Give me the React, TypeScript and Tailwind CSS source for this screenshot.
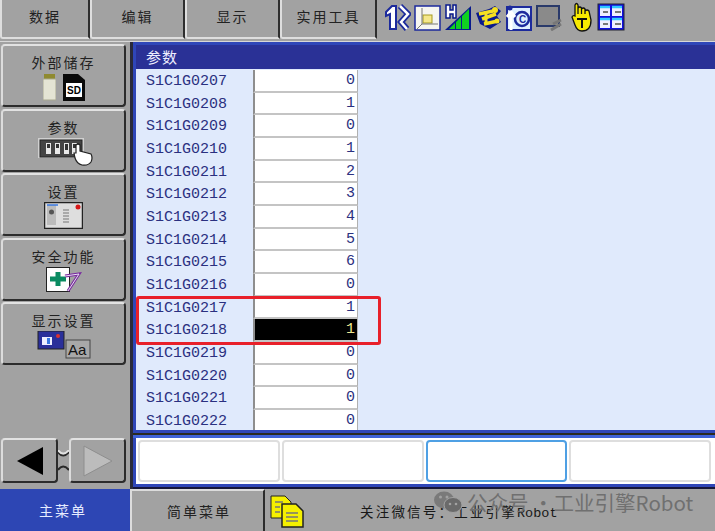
import React from "react";

const cjk = "font-['Noto_Sans_CJK_SC','Noto_Sans',sans-serif]";
const bevel =
  "border-2 border-t-[#e2e2e2] border-l-[#dcdcdc] border-r-[#2c2c2c] border-b-[#2c2c2c] rounded-[4px] bg-[#a2a2a2]";

const rows: [string, string][] = [
  ["S1C1G0207", "0"],
  ["S1C1G0208", "1"],
  ["S1C1G0209", "0"],
  ["S1C1G0210", "1"],
  ["S1C1G0211", "2"],
  ["S1C1G0212", "3"],
  ["S1C1G0213", "4"],
  ["S1C1G0214", "5"],
  ["S1C1G0215", "6"],
  ["S1C1G0216", "0"],
  ["S1C1G0217", "1"],
  ["S1C1G0218", "1"],
  ["S1C1G0219", "0"],
  ["S1C1G0220", "0"],
  ["S1C1G0221", "0"],
  ["S1C1G0222", "0"],
];

function TopButton({ label, width }: { label: string; width: string }) {
  return (
    <div
      className={`${width} h-[39px] flex items-center justify-center pb-[4px] border-l-2 border-l-[#dedede] border-r-2 border-r-[#2e2e2e] border-b-2 border-b-[#dedede] rounded-bl-[3px] text-[14px] tracking-[2px] text-[#222] ${cjk}`}
    >
      {label}
    </div>
  );
}

function ToolIcons() {
  return (
    <div className="flex items-center gap-[3px] ml-[7px] mt-[3px] h-[28px] self-start">
      <svg width="27" height="28" viewBox="0 0 27 28">
        <path d="M2 9 L8 3 H12 V26 H6 V11 L2 13Z" fill="#fff" stroke="#1c2a9c" strokeWidth="2" />
        <path d="M16 3 L24 11 L17 19 L23 26" fill="none" stroke="#1c2a9c" strokeWidth="6" />
        <path d="M16 3 L24 11 L17 19 L23 26" fill="none" stroke="#fff" strokeWidth="2.5" />
      </svg>
      <svg width="27" height="28" viewBox="0 0 27 28">
        <rect x="1" y="3" width="25" height="24" fill="#f6f6f0" stroke="#1c2a9c" strokeWidth="1.5" />
        <rect x="9" y="12" width="9" height="8" fill="#f5e88a" stroke="#a59a20" />
        <path d="M8 5 V21 H24 M8 21 L3 26" fill="none" stroke="#777" strokeWidth="1" />
      </svg>
      <svg width="28" height="28" viewBox="0 0 28 28">
        <path d="M1 27 L27 3 V27Z" fill="#0a1a8c" />
        <path d="M5 26 L11 20 V26Z M12 26 V19 L17 14 V26Z M18 26 V13 L25 6 V26Z" fill="#10d020" />
        <path d="M2 2 V15 H6 V11 H9 V15 H12 V2 H9 V7 H6 V2Z" fill="#fff" stroke="#0a1a8c" strokeWidth="1.5" />
      </svg>
      <svg width="27" height="28" viewBox="0 0 27 28">
        <path d="M1 10 L14 6 L20 3 L26 8 L22 13 L26 19 L15 26 L5 21 Z" fill="#0a1a8c" />
        <path d="M4 11 L18 8 M7 16 L21 11 M9 21 L23 18" stroke="#f5e020" strokeWidth="3.5" fill="none" />
        <path d="M11 8 V20" stroke="#f5e020" strokeWidth="3" />
        <circle cx="20" cy="7" r="3" fill="#f5e020" />
        <circle cx="22" cy="18" r="2.5" fill="#f5e020" />
      </svg>
      <svg width="27" height="28" viewBox="0 0 27 28">
        <rect x="2" y="4" width="24" height="23" fill="#dff0ff" stroke="#1c2a9c" strokeWidth="2" />
        <circle cx="17" cy="16" r="7" fill="none" stroke="#1c2a9c" strokeWidth="2.5" />
        <text x="14" y="20" fontSize="10" fill="#1c2a9c" fontFamily="Liberation Sans, sans-serif" fontWeight="700">C</text>
        <path d="M6 27 V12 M2 14 L6 9 L10 14" stroke="#fff" strokeWidth="3" fill="none" />
        <circle cx="5" cy="5" r="2.5" fill="#1c2a9c" />
      </svg>
      <svg width="27" height="28" viewBox="0 0 27 28">
        <rect x="2" y="3" width="22" height="20" fill="#8a8a8a" stroke="#2a3a6a" strokeWidth="2" />
        <path d="M16 27 L26 21 M18 21 L26 17" stroke="#777" strokeWidth="3" />
      </svg>
      <svg width="21" height="30" viewBox="0 0 21 30" className="ml-[6px]">
        <path d="M4 3 Q5.5 0 7 3 V12 V6 Q9 4 10.5 6 V12 V7 Q12.5 5 14 7 V12 V9 Q16 7 18 9 L20 18 Q20 29 11 29 Q6 29 4 23 L1 15 Q2 13 4 14Z" fill="#f7ea00" stroke="#111" strokeWidth="1.3" />
        <path d="M6 17 H16 M11 17 V26" stroke="#111" strokeWidth="2" />
      </svg>
      <svg width="28" height="28" viewBox="0 0 28 28" className="ml-[2px]">
        <rect x="1" y="1" width="26" height="26" fill="#1010e0" stroke="#223" />
        <rect x="3" y="3" width="10" height="10" fill="#eef" />
        <rect x="15" y="3" width="10" height="10" fill="#eef" />
        <rect x="3" y="15" width="10" height="10" fill="#eef" />
        <rect x="15" y="15" width="10" height="10" fill="#eef" />
        <path d="M3 4 H13 M15 4 H25 M3 16 H13 M15 16 H25" stroke="#30c8ff" strokeWidth="2.5" />
        <path d="M6 9 H11 M18 9 H24 M6 21 H11 M18 21 H24" stroke="#777" strokeWidth="2" />
      </svg>
    </div>
  );
}

function Icon({ kind }: { kind: string }) {
  if (kind === "storage")
    return (
      <div className="flex items-end gap-[7px] h-[28px]">
        <svg width="13" height="27" viewBox="0 0 13 27">
          <rect x="1" y="0" width="11" height="5" fill="#8f8a30" />
          <rect x="0" y="5" width="13" height="21" fill="#e4e4d4" stroke="#a8a890" />
        </svg>
        <svg width="22" height="27" viewBox="0 0 22 27">
          <path d="M0 0 H15 L22 6 V27 H0Z" fill="#0a0a0a" />
          <rect x="3" y="9" width="16" height="14" fill="#fff" />
          <text x="4" y="20" fontSize="10" fontWeight="700" fontFamily="Liberation Sans, sans-serif" fill="#000">SD</text>
        </svg>
      </div>
    );
  if (kind === "param")
    return (
      <svg width="56" height="28" viewBox="0 0 56 28" className="-mr-[4px]">
        <rect x="0" y="0" width="46" height="20" fill="#d0d0d0" />
        <rect x="2" y="2" width="42" height="17" fill="#444" stroke="#222" />
        <rect x="8" y="5" width="5" height="11" fill="#e8e8e8" />
        <rect x="17" y="5" width="5" height="11" fill="#e8e8e8" />
        <rect x="26" y="5" width="5" height="11" fill="#e8e8e8" />
        <rect x="34" y="5" width="5" height="11" fill="#e8e8e8" />
        <rect x="9" y="6" width="3" height="4" fill="#333" />
        <rect x="18" y="6" width="3" height="4" fill="#333" />
        <rect x="27" y="6" width="3" height="6" fill="#333" />
        <rect x="35" y="6" width="3" height="4" fill="#333" />
        <path d="M38 7 Q40 5 42 7 V13 L53 16 Q55 20 53 24 Q50 28 44 27 Q39 26 37 20 L36 15 H38Z" fill="#fff" stroke="#222" strokeWidth="1.2" />
      </svg>
    );
  if (kind === "setting")
    return (
      <svg width="39" height="27" viewBox="0 0 39 27">
        <rect x="0.5" y="0.5" width="38" height="26" fill="#dedede" stroke="#222" strokeWidth="1.5" />
        <rect x="3" y="3" width="9" height="20" fill="#bcbcbc" />
        <path d="M3 3 H14" stroke="#3a78e0" strokeWidth="1.5" />
        <circle cx="7.5" cy="10" r="2.5" fill="#555" />
        <path d="M19 8 H25 M19 11 H25 M19 14 H25 M19 17 H25 M19 20 H25" stroke="#999" strokeWidth="1.5" />
        <circle cx="34" cy="5" r="2.5" fill="#d81818" />
      </svg>
    );
  if (kind === "safe")
    return (
      <svg width="36" height="26" viewBox="0 0 36 26">
        <rect x="0.5" y="0.5" width="23" height="24" fill="#fdfdfd" stroke="#222" />
        <path d="M12 5 V19 M4 12 H20" stroke="#098a60" strokeWidth="5" />
        <path d="M19 9 L33 7 L22 24" fill="none" stroke="#7a2aa0" strokeWidth="3" />
        <path d="M19 9 L33 7 L22 24" fill="none" stroke="#e8e0f0" strokeWidth="1" />
      </svg>
    );
  return (
    <svg width="54" height="28" viewBox="0 0 54 28">
      <rect x="1" y="0" width="26" height="18" fill="#2a2f9a" stroke="#222" />
      <rect x="5" y="6" width="10" height="8" fill="#eef" />
      <rect x="10" y="7" width="3" height="6" fill="#3a78e0" />
      <circle cx="21" cy="5" r="2" fill="#d83030" />
      <rect x="29" y="9" width="24" height="18" fill="#a8a8a8" stroke="#444" />
      <text x="31" y="24" fontSize="15" fontFamily="Liberation Sans, sans-serif" fill="#111">Aa</text>
    </svg>
  );
}

function SideButton({ label, icon }: { label: string; icon: string }) {
  return (
    <div className={`${bevel} w-[125px] h-[63px] flex flex-col items-center pt-[7px]`}>
      <div className={`text-[14px] leading-[18px] tracking-[2px] text-[#222] ${cjk}`}>{label}</div>
      <div className="mt-[2px] flex justify-center">
        <Icon kind={icon} />
      </div>
    </div>
  );
}

function Row({ name, value, index }: { name: string; value: string; index: number }) {
  const selected = name === "S1C1G0218";
  return (
    <div className="h-[22.67px] shrink-0 flex items-stretch">
      <div className="w-[117px] pl-[10px] pt-[2px] flex items-center text-[15px] text-[#2b3080] font-['Liberation_Mono',monospace]">
        {name}
      </div>
      <div
        className={`w-[105px] flex items-center justify-end pr-[2px] pt-[2px] text-[15px] font-['Liberation_Mono',monospace] border-l-2 border-l-[#8e8e8e] border-b-2 border-b-[#c4c4c4] border-r border-r-[#b0b0b0] ${
          selected ? "bg-black text-[#f0e890]" : "bg-white text-[#2b3080]"
        }`}
        data-index={index}
      >
        {value}
      </div>
    </div>
  );
}

export default function App() {
  return (
    <div className="relative w-[715px] h-[531px] overflow-hidden bg-[#a2a2a2] flex flex-col">
      <div className="flex h-[42px] shrink-0 border-b border-[#d8d8d8]">
        <TopButton label="数据" width="w-[90px]" />
        <TopButton label="编辑" width="w-[95px]" />
        <TopButton label="显示" width="w-[95px]" />
        <TopButton label="实用工具" width="w-[97px]" />
        <ToolIcons />
      </div>

      <div className="flex h-[447px] shrink-0">
        <div className="w-[130px] shrink-0 flex flex-col pl-[1px] pt-[2px]">
          <div className="flex flex-col gap-[1.5px]">
            <SideButton label="外部储存" icon="storage" />
            <SideButton label="参数" icon="param" />
            <SideButton label="设置" icon="setting" />
            <SideButton label="安全功能" icon="safe" />
            <SideButton label="显示设置" icon="display" />
          </div>
          <div className="flex items-center mt-[73px] w-[125px]">
            <div className={`${bevel} w-[57px] h-[45px] flex items-center justify-center`}>
              <svg width="28" height="30" viewBox="0 0 28 30"><path d="M27 1 V29 L1 15Z" fill="#000" /></svg>
            </div>
            <svg width="11" height="22" viewBox="0 0 11 22" className="shrink-0">
              <path d="M0 2 Q5 9 11 2 M0 20 Q5 13 11 20" fill="none" stroke="#2a2a2a" strokeWidth="2" />
              <path d="M0 0 Q5 7 11 0" fill="none" stroke="#e2e2e2" strokeWidth="2" />
            </svg>
            <div className={`${bevel} w-[57px] h-[45px] flex items-center justify-center`}>
              <svg width="30" height="32" viewBox="0 0 30 32"><path d="M1 1 V31 L29 16Z" fill="#bcbcbc" stroke="#8e8e8e" /></svg>
            </div>
          </div>
        </div>

        <div className="flex-1 flex flex-col border-l-[3px] border-l-[#2a2a3a] bg-[#2f46b8]">
          <div className="flex-1 flex flex-col pl-[3px] pt-[3px] min-h-0">
            <div className={`h-[24px] shrink-0 bg-[#2a3196] pl-[10px] flex items-center text-[15px] tracking-[1px] text-[#eef] ${cjk}`}>
              参数
            </div>
            <div className="bg-[#e0eafc] h-[362px] overflow-hidden flex flex-col pt-[1px]">
              {rows.map(([n, v], i) => (
                <Row key={n} name={n} value={v} index={i} />
              ))}
            </div>
            <div className="h-[3px] bg-[#2f46b8]" />
            <div className="h-[2px] bg-[#2a2a20] -ml-[3px]" />
            <div className="h-[3px] bg-[#3f62d8] -ml-[3px]" />
          </div>
          <div className="h-[46px] shrink-0 bg-white flex gap-[2px] pl-[2px] pr-[4px] py-[2px] ml-[3px]">
            <div className="flex-1 rounded-[4px] border-2 border-[#dedede]" />
            <div className="flex-1 rounded-[4px] border-2 border-[#dedede]" />
            <div className="flex-1 rounded-[4px] border-2 border-[#4fa0e4]" />
            <div className="flex-1 rounded-[4px] border-2 border-[#dedede]" />
          </div>
          <div className="h-[3px] bg-[#2f46b8] shrink-0" />
          <div className="h-[2px] bg-[#16163a] shrink-0" />
        </div>
      </div>

      <div className="flex flex-1 items-stretch">
        <div className={`w-[130px] bg-[#2d46b4] pr-[4px] flex items-center justify-center text-[14px] tracking-[2px] text-[#e6ecff] ${cjk}`}>
          主菜单
        </div>
        <div className={`w-[135px] pl-[3px] border-l-2 border-l-[#dcdcdc] border-t-2 border-t-[#dcdcdc] border-r-2 border-r-[#2c2c2c] flex items-center justify-center text-[14px] tracking-[2px] text-[#222] ${cjk}`}>
          简单菜单
        </div>
        <div className="w-[36px] pl-[4px] pt-[5px]">
          <svg width="36" height="34" viewBox="0 0 36 34">
            <path d="M2 2 H16 L22 8 V24 H2Z" fill="#f5f000" stroke="#222" />
            <path d="M13 10 H27 L34 17 V33 H13Z" fill="#f5f000" stroke="#222" strokeWidth="1.5" />
            <path d="M6 8 H14 M6 13 H11 M6 18 H11 M17 19 H29 M17 23 H29 M17 27 H29" stroke="#777" strokeWidth="1.5" />
          </svg>
        </div>
        <div className={`pl-[59px] pt-[12px] text-[13.5px] tracking-[2.2px] text-[#181818] whitespace-nowrap ${cjk}`}>
          关注微信号：工业引擎<span className="font-['Liberation_Mono',monospace] tracking-[0px]">Robot</span>
        </div>
      </div>

      <div className="absolute left-[136px] top-[296px] w-[245px] h-[49px] rounded-[3px] border-[3px] border-[#e8202a]" />

      <div className={`absolute left-[433px] top-[487px] flex items-center gap-[4px] text-[#707070] text-[20.5px] whitespace-nowrap ${cjk}`}>
        <svg width="30" height="24" viewBox="0 0 30 24">
          <ellipse cx="11" cy="10" rx="10" ry="8.5" fill="#7a7a7a" />
          <ellipse cx="20" cy="15" rx="9" ry="7.5" fill="#6a6a6a" stroke="#a2a2a2" />
          <circle cx="7.5" cy="7" r="1.5" fill="#a2a2a2" />
          <circle cx="14" cy="7" r="1.5" fill="#a2a2a2" />
          <circle cx="17" cy="14" r="1.3" fill="#a2a2a2" />
          <circle cx="23" cy="14" r="1.3" fill="#a2a2a2" />
        </svg>
        公众号 ·工业引擎Robot
      </div>
    </div>
  );
}
